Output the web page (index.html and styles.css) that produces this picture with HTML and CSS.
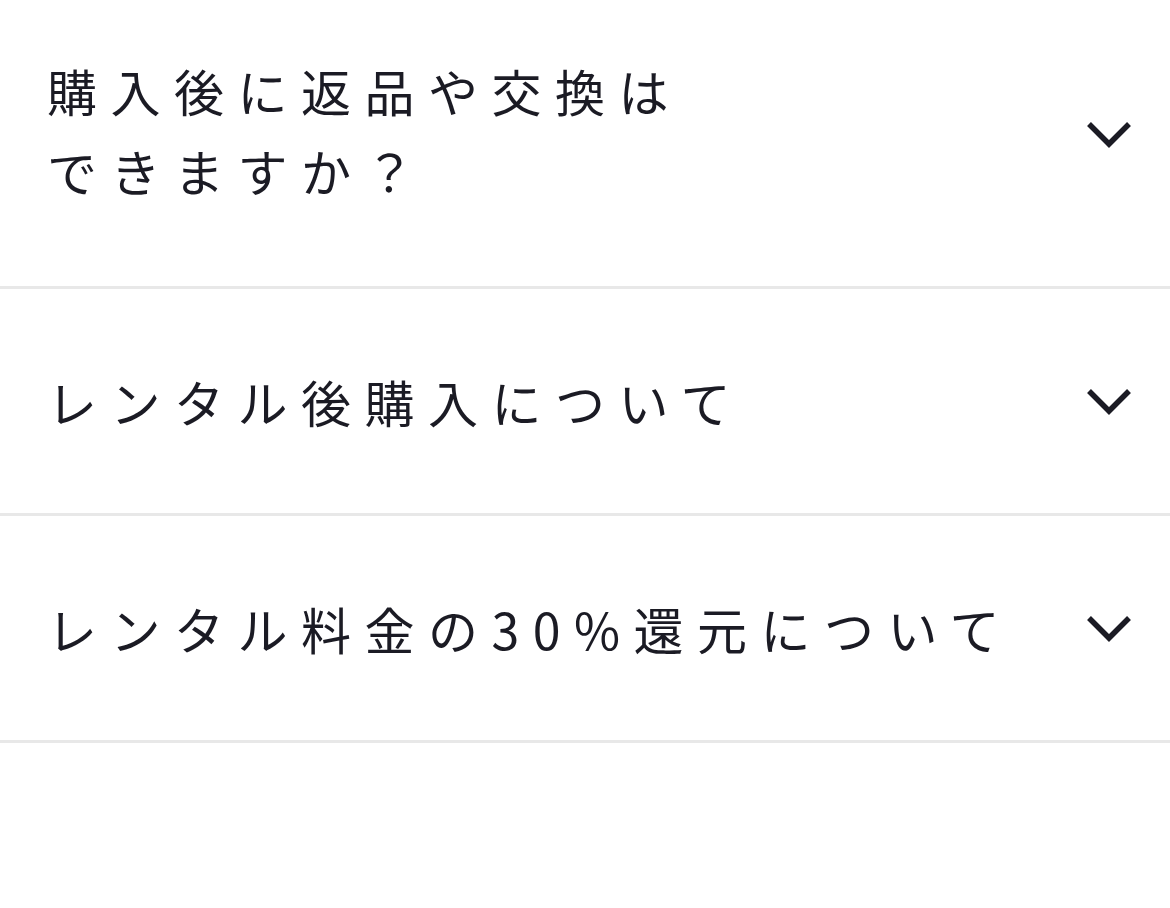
FILE: index.html
```html
<!DOCTYPE html>
<html lang="ja">
<head>
	<meta charset="utf-8">
	<title>FAQ</title>
	<link rel="stylesheet" href="styles.css">
</head>
<body>
<div class="faq">
	<div class="faq-item first">
		<p class="faq-q">購入後に返品や交換は<br>できますか？</p>
		<svg class="faq-arrow" viewBox="0 0 48 32"><polyline points="4,6 24,26 44,6"/></svg>
	</div>
	<div class="faq-item">
		<p class="faq-q">レンタル後購入について</p>
		<svg class="faq-arrow" viewBox="0 0 48 32"><polyline points="4,6 24,26 44,6"/></svg>
	</div>
	<div class="faq-item">
		<p class="faq-q">レンタル料金の30%還元について</p>
		<svg class="faq-arrow" viewBox="0 0 48 32"><polyline points="4,6 24,26 44,6"/></svg>
	</div>
</div>
</body>
</html>
```

FILE: styles.css
```css
*{
	margin:0;
	padding:0;
}
body{
	background:#fff;
	font-family:"Noto Sans CJK JP","Noto Sans",sans-serif;
	color:#1b1b24;
}
.faq-item{
	display:flex;
	justify-content:space-between;
	align-items:center;
	padding:72px 40px 72px 47px;
	border-bottom:3px solid #e8e8e8;
}
.faq-item.first{
	padding-top:50px;
	padding-bottom:76px;
}
.faq-q{
	font-size:50px;
	line-height:80px;
	letter-spacing:13.5px;
}
.faq-arrow{
	width:48px;
	height:32px;
	flex-shrink:0;
	margin-right:-3px;
}
.first .faq-arrow{
	margin-top:8px;
}
.faq-arrow polyline{
	fill:none;
	stroke:#1b1b24;
	stroke-width:5.5;
}
```
